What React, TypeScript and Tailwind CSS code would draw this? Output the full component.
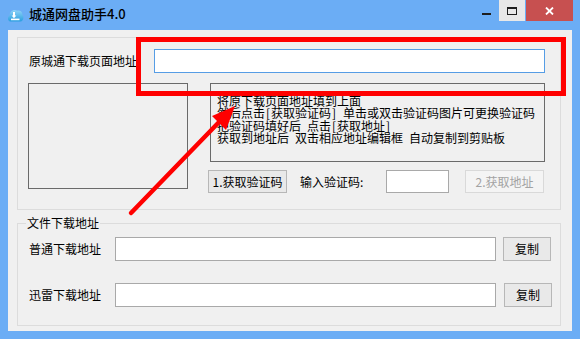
import React from "react";

const font = "font-['Noto_Sans_CJK_SC','Noto_Sans',sans-serif]";

function AppIcon() {
  return (
    <svg width="17" height="17" viewBox="0 0 17 17">
      <defs>
        <linearGradient id="g" x1="0" y1="0" x2="0" y2="1">
          <stop offset="0" stopColor="#8fd3f7" />
          <stop offset="1" stopColor="#2a9fe0" />
        </linearGradient>
      </defs>
      <path
        d="M3.5 15.5 C0.5 15.5 0.2 10.8 2.6 9.8 C2.4 5.2 7 2.6 10.2 4.8 C12.6 3.8 15.6 5.6 15.2 8.6 C17.2 9.8 16.8 15.5 13.2 15.5 Z"
        fill="url(#g)"
      />
      <rect x="6" y="6" width="2" height="5" fill="#fff" />
      <path d="M4.6 9.6 L9.4 9.6 L7 12.2 Z" fill="#fff" />
      <rect x="4" y="12.6" width="8.5" height="1.6" fill="#fff" />
    </svg>
  );
}

// Render half-width chars (brackets, spaces) at a fixed 6px cell, like a bitmap CJK font
function HW({ text }: { text: string }) {
  const parts = text.split(/([\[\] ])/).filter((p) => p !== "");
  return (
    <>
      {parts.map((p, i) =>
        p === "[" || p === "]" || p === " " ? (
          <span key={i} className="inline-block w-[6px] text-center">
            {p === " " ? "\u00a0" : p}
          </span>
        ) : (
          <span key={i}>{p}</span>
        )
      )}
    </>
  );
}

function Btn({ children, disabled, className = "" }: { children: React.ReactNode; disabled?: boolean; className?: string }) {
  return (
    <div
      className={
        "flex items-center justify-center border text-[12px] leading-[14px] " +
        (disabled
          ? "border-[#d9d9d9] bg-[#f4f4f4] text-[#a3a3a3] "
          : "border-[#b7b7b7] bg-[#e9e9e9] text-black ") +
        className
      }
    >
      {children}
    </div>
  );
}

export default function App() {
  return (
    <div className={"relative w-[580px] h-[339px] bg-[#6badf5] flex flex-col overflow-hidden " + font}>
      {/* Title bar */}
      <div className="h-[30px] shrink-0 flex items-start">
        <div className="ml-[7px] mt-[6px] w-[17px] h-[17px]">
          <AppIcon />
        </div>
        <div className="ml-[5px] mt-[6px] text-[13px] leading-[15px] text-black font-medium">城通网盘助手4.0</div>
        <div className="ml-auto mr-[7px] flex items-start">
          <div className="w-[26px] h-[21px] flex justify-center">
            <div className="mt-[13px] w-[9px] h-[2px] bg-[#1e1e1e]" />
          </div>
          <div className="w-[26px] h-[21px] bg-[#e8e8e8] flex justify-center">
            <div className="mt-[7px] w-[10px] h-[8px] border border-[#1e1e1e] border-t-2" />
          </div>
          <div className="ml-[1px] w-[47px] h-[21px] bg-[#c75050] flex items-center justify-center">
            <svg width="9" height="8" viewBox="0 0 9 8">
              <path d="M1 0.5 L8 7.5 M8 0.5 L1 7.5" stroke="#fff" strokeWidth="1.8" />
            </svg>
          </div>
        </div>
      </div>

      {/* Client area */}
      <div className="mx-[8px] mb-[8px] flex-1 bg-[#f0f0f0] pl-[9px] pr-[11px] pt-[7px] flex flex-col">
        {/* Group 1 */}
        <div className="h-[173px] border border-[#dcdcdc] pl-[10px] pt-[11px] flex flex-col">
          <div className="flex items-center h-[24px]">
            <div className="ml-[1px] w-[125px] text-[12px] leading-[14px] text-black">原城通下载页面地址</div>
            <div className="w-[391px] h-[24px] bg-white border border-[#569de5]" />
          </div>
          <div className="mt-[10px] flex items-start">
            <div className="w-[160px] h-[106px] border border-[#6a6a6a]" />
            <div className="ml-[22px] flex flex-col">
              <div className="w-[335px] h-[79px] border border-[#6a6a6a] pl-[6px] pt-[11px] text-[12px] leading-[12.3px] text-black whitespace-nowrap">
                <div><HW text="将原下载页面地址填到上面" /></div>
                <div><HW text="然后点击[获取验证码] 单击或双击验证码图片可更换验证码" /></div>
                <div><HW text="把验证码填好后 点击[获取地址]" /></div>
                <div><HW text="获取到地址后 双击相应地址编辑框 自动复制到剪贴板" /></div>
              </div>
              <div className="mt-[8px] flex items-center">
                <Btn className="-ml-[2px] w-[79px] h-[23px]">1.获取验证码</Btn>
                <div className="ml-[13px] w-[86px] text-[12px] leading-[14px] text-black">输入验证码:</div>
                <div className="w-[63px] h-[23px] bg-white border border-[#a9a9a9]" />
                <Btn disabled className="ml-[16px] w-[79px] h-[23px]">2.获取地址</Btn>
              </div>
            </div>
          </div>
        </div>

        {/* Group 2 */}
        <div className="relative mt-[13px] h-[103px] border border-[#dcdcdc] pl-[11px] pt-[13px] flex flex-col">
          <span className="absolute -top-[7px] left-[8px] bg-[#f0f0f0] px-[1px] text-[12px] leading-[12px] text-black">
            文件下载地址
          </span>
          <div className="flex items-center h-[24px]">
            <div className="w-[86px] text-[12px] leading-[14px] text-black">普通下载地址</div>
            <div className="w-[381px] h-[24px] bg-white border border-[#a9a9a9]" />
            <Btn className="ml-[7px] w-[48px] h-[24px]">复制</Btn>
          </div>
          <div className="mt-[22px] flex items-center h-[24px]">
            <div className="w-[86px] text-[12px] leading-[14px] text-black">迅雷下载地址</div>
            <div className="w-[381px] h-[24px] bg-white border border-[#a9a9a9]" />
            <Btn className="ml-[8px] w-[48px] h-[24px]">复制</Btn>
          </div>
        </div>
      </div>

      {/* Annotation overlays */}
      <div className="absolute left-[136px] top-[37px] w-[430px] h-[59px] border-[5px] border-[#ff0000]" />
      <svg className="absolute inset-0 pointer-events-none" width="580" height="339" viewBox="0 0 580 339">
        <line x1="131" y1="213" x2="222" y2="119" stroke="#ff0000" strokeWidth="4.5" strokeLinecap="round" />
        <polygon points="235,106 212,116 226,130" fill="#ff0000" />
      </svg>
    </div>
  );
}
